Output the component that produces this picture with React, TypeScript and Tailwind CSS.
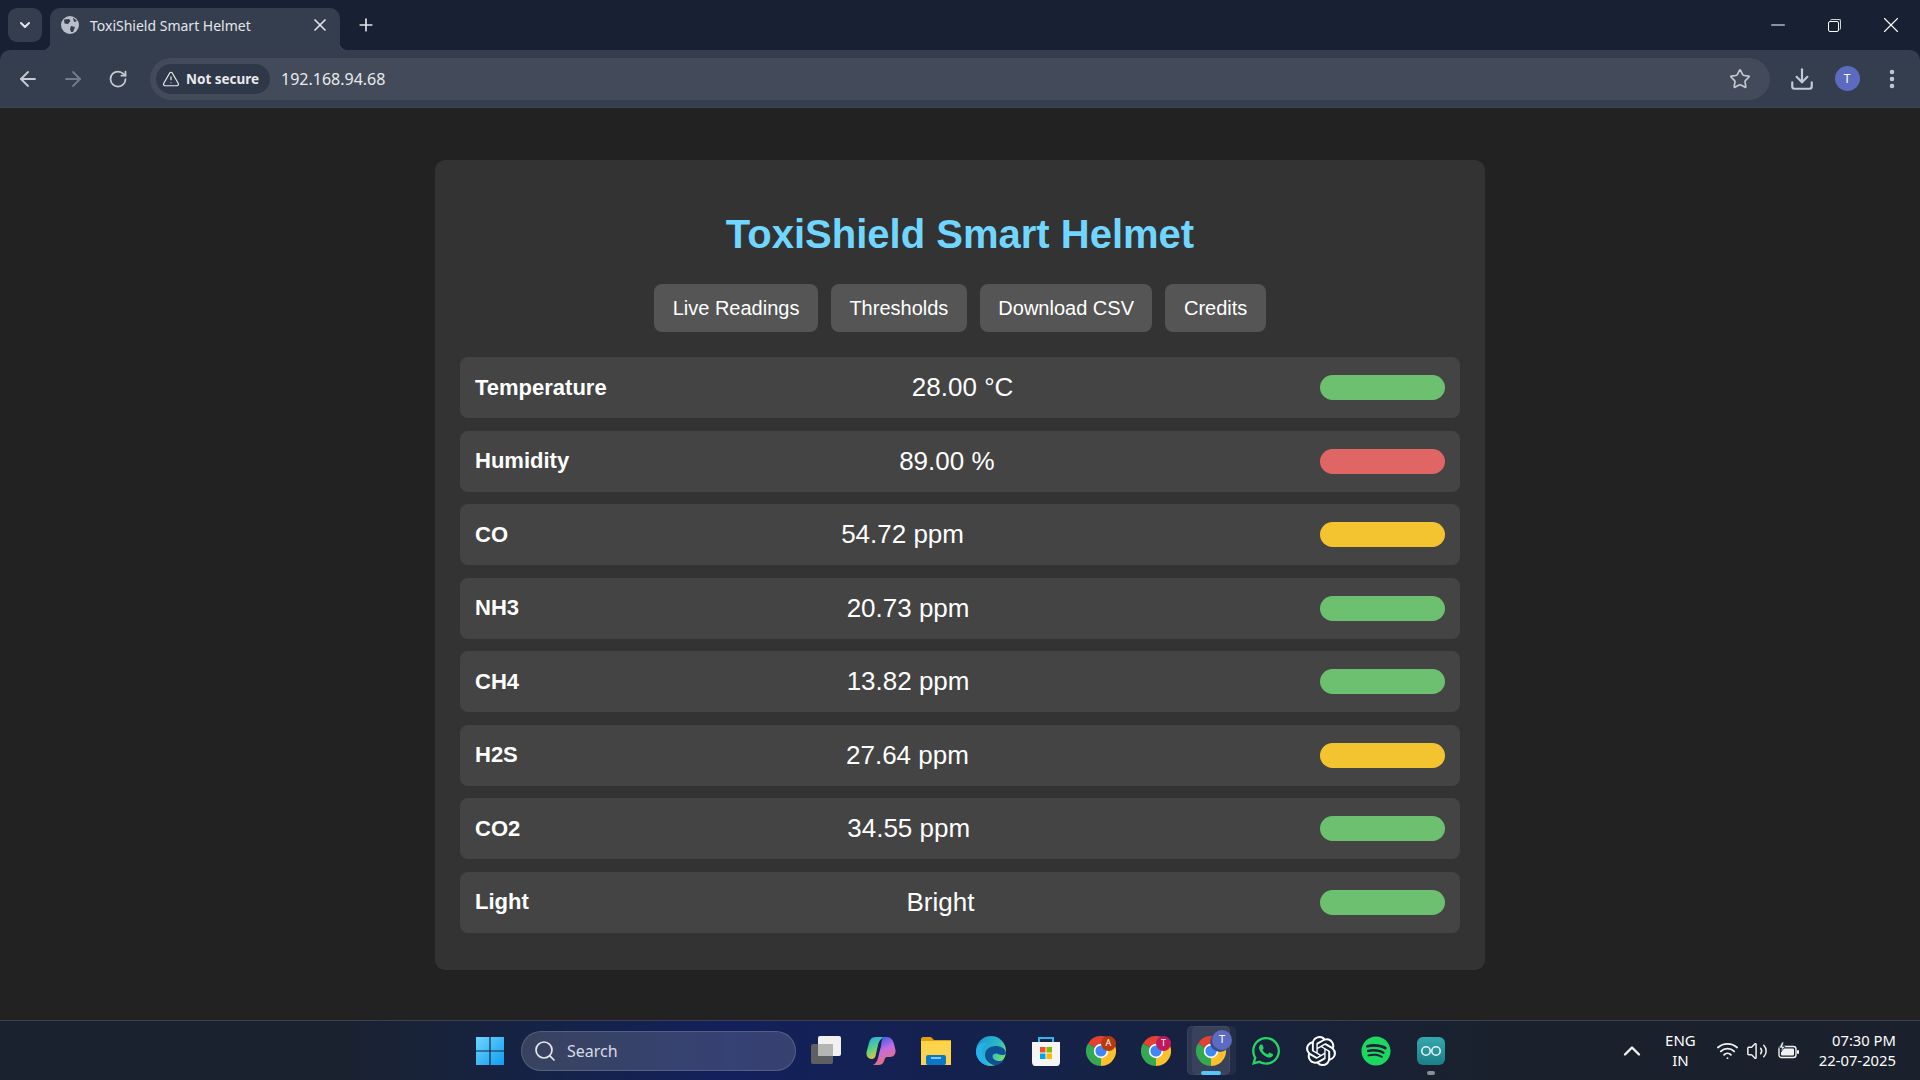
import React from "react";
import {
  ArrowLeft,
  ArrowRight,
  ChevronDown,
  ChevronUp,
  Download,
  EllipsisVertical,
  Minus,
  Plus,
  RotateCw,
  Search,
  Star,
  TriangleAlert,
  Volume2,
  Wifi,
  X,
} from "lucide-react";
import { FaSpotify, FaWhatsapp } from "react-icons/fa";
import { SiOpenai } from "react-icons/si";

type Reading = {
  name: string;
  value: string;
  pill: string;
};

const readings: Reading[] = [
  { name: "Temperature", value: "28.00 °C", pill: "bg-[#6cc070]" },
  { name: "Humidity", value: "89.00 %", pill: "bg-[#e06666]" },
  { name: "CO", value: "54.72 ppm", pill: "bg-[#f4c430]" },
  { name: "NH3", value: "20.73 ppm", pill: "bg-[#6cc070]" },
  { name: "CH4", value: "13.82 ppm", pill: "bg-[#6cc070]" },
  { name: "H2S", value: "27.64 ppm", pill: "bg-[#f4c430]" },
  { name: "CO2", value: "34.55 ppm", pill: "bg-[#6cc070]" },
  { name: "Light", value: "Bright", pill: "bg-[#6cc070]" },
];

const tabs = ["Live Readings", "Thresholds", "Download CSV", "Credits"];

function GlobeIcon() {
  return (
    <svg width="18" height="18" viewBox="0 0 18 18">
      <circle cx="9" cy="9" r="9" fill="#b9bec8" />
      <path d="M3 3.5 L8 3 L9.5 5 L7 8 L3.5 7.5 Z M10 10 L14 11 L12 16 L10 16 L9 13 Z M12 1.5 L16 5 L13 6 Z" fill="#353e4f" />
    </svg>
  );
}

function ChromeIcon({ badge, badgeColor, large }: { badge: string; badgeColor: string; large?: boolean }) {
  return (
    <div className="relative h-[30px] w-[30px]">
      <svg width="30" height="30" viewBox="0 0 30 30">
        <path d="M15 15 L2 7.5 A15 15 0 0 1 28 7.5 Z" fill="#e34133" />
        <path d="M15 15 L28 7.5 A15 15 0 0 1 15 30 Z" fill="#fbc02d" />
        <path d="M15 15 L15 30 A15 15 0 0 1 2 7.5 Z" fill="#34a853" />
        <circle cx="15" cy="15" r="7.2" fill="#ffffff" />
        <circle cx="15" cy="15" r="5.6" fill="#4285f4" />
      </svg>
      {large ? (
        <div className="absolute right-[-6px] top-[-6px] flex h-[20px] w-[20px] items-center justify-center rounded-full bg-[#5c6bc0] font-['Noto_Sans'] text-[11px] text-white shadow-[-2px_2px_0_#3f4a8a]">
          {badge}
        </div>
      ) : (
        <div
          className={`absolute right-0 top-0 flex h-[15px] w-[15px] items-center justify-center rounded-full font-['Noto_Sans'] text-[9px] text-white ${badgeColor}`}
        >
          {badge}
        </div>
      )}
    </div>
  );
}

function WindowsIcon() {
  return (
    <svg width="30" height="30" viewBox="0 0 30 30">
      <defs>
        <linearGradient id="winGrad" x1="0" y1="0" x2="1" y2="1">
          <stop offset="0" stopColor="#6fd6ff" />
          <stop offset="1" stopColor="#0f9cf0" />
        </linearGradient>
      </defs>
      <path d="M1 1 H14.4 V14.4 H1 Z M15.6 1 H29 V14.4 H15.6 Z M1 15.6 H14.4 V29 H1 Z M15.6 15.6 H29 V29 H15.6 Z" fill="url(#winGrad)" />
    </svg>
  );
}

function TaskViewIcon() {
  return (
    <svg width="30" height="30" viewBox="0 0 30 30">
      <rect x="0" y="8" width="22" height="20" rx="2" fill="#5d5f63" />
      <rect x="7" y="0" width="23" height="20" rx="2" fill="#f1f1f1" />
      <rect x="7" y="8" width="15" height="12" fill="#b5b5b5" />
    </svg>
  );
}

function CopilotIcon() {
  return (
    <svg width="30" height="30" viewBox="0 0 30 30">
      <defs>
        <linearGradient id="copA" x1="0.2" y1="0" x2="0.6" y2="1">
          <stop offset="0" stopColor="#2aa8f0" />
          <stop offset="0.45" stopColor="#4fd08a" />
          <stop offset="1" stopColor="#f6c431" />
        </linearGradient>
        <linearGradient id="copB" x1="0.3" y1="0" x2="0.7" y2="1">
          <stop offset="0" stopColor="#2f5fe8" />
          <stop offset="0.45" stopColor="#c36be6" />
          <stop offset="1" stopColor="#f4705a" />
        </linearGradient>
      </defs>
      <path d="M9 1 H19 C15 2 13 5 12 9 L9.5 20 C9 22 7.5 23 6 23 C2 23 0 20 0.5 16 L3 7 C4 3 6 1 9 1 Z" fill="url(#copA)" />
      <path d="M17 1 H21 C25 1 27 4 28 8 L29.5 14 C30 18 28 21 24 21 H21 C19 21 19 23 18 25 C17 28 15 29 12 29 H7 C9 28 11 26 12 22 L15 10 C15.5 6 16 3 17 1 Z" fill="url(#copB)" />
    </svg>
  );
}

function FolderIcon() {
  return (
    <svg width="30" height="30" viewBox="0 0 30 30">
      <path d="M0 3 C0 2 1 1 2 1 H10 L13 4 H30 V8 H0 Z" fill="#e0a00c" />
      <path d="M0 5 H30 V29 H0 Z" fill="#fcd34d" />
      <rect x="5" y="19" width="20" height="10" rx="2" fill="#0a78c9" />
      <rect x="10" y="21" width="10" height="2" fill="#7fc8f2" />
    </svg>
  );
}

function EdgeIcon() {
  return (
    <svg width="30" height="30" viewBox="0 0 30 30">
      <defs>
        <linearGradient id="edgeA" x1="0" y1="0" x2="1" y2="0.7">
          <stop offset="0" stopColor="#1792d8" />
          <stop offset="0.6" stopColor="#2bb8c8" />
          <stop offset="1" stopColor="#7be06a" />
        </linearGradient>
      </defs>
      <circle cx="15" cy="15" r="15" fill="url(#edgeA)" />
      <path d="M30 17 C29 12 25 10 20 10 C13 10 9 14 9 19 C9 25 15 30 21 29 C25 28 27 26 28 24 C24 26 17 25 16.5 20.5 C16.5 18 19 17 22 18 C25 19 29 20 30 17 Z" fill="#0f4f96" />
      <path d="M0 15 C1 9 6 6 11 7 C7 10 5 15 6.5 21 C8 25 11 28 15 30 C6 30 0 23 0 15 Z" fill="#25b2ea" />
    </svg>
  );
}

function StoreIcon() {
  return (
    <svg width="30" height="30" viewBox="0 0 30 30">
      <path d="M8 7 V2 H22 V7" fill="none" stroke="#2fb6f0" strokeWidth="2" />
      <path d="M1 6 H29 V26 C29 28 28 30 26 30 H4 C2 30 1 28 1 26 Z" fill="#f5f5f5" />
      <rect x="9" y="11" width="5.5" height="5.5" fill="#f25022" />
      <rect x="15.5" y="11" width="5.5" height="5.5" fill="#7fba00" />
      <rect x="9" y="17.5" width="5.5" height="5.5" fill="#00a4ef" />
      <rect x="15.5" y="17.5" width="5.5" height="5.5" fill="#ffb900" />
    </svg>
  );
}

function ArduinoIcon() {
  return (
    <svg width="28" height="30" viewBox="0 0 28 30">
      <defs>
        <linearGradient id="ardGrad" x1="0" y1="0" x2="0" y2="1">
          <stop offset="0" stopColor="#35a8ad" />
          <stop offset="1" stopColor="#1b7f86" />
        </linearGradient>
      </defs>
      <rect width="28" height="28" y="1" rx="6" fill="url(#ardGrad)" />
      <circle cx="9" cy="15" r="4.2" fill="none" stroke="#dff5f5" strokeWidth="1.6" />
      <circle cx="19" cy="15" r="4.2" fill="none" stroke="#dff5f5" strokeWidth="1.6" />
    </svg>
  );
}

function BatteryIcon() {
  return (
    <svg width="22" height="18" viewBox="0 0 22 18">
      <rect x="1" y="4.5" width="17" height="11" rx="2.5" fill="none" stroke="#f2f2f2" strokeWidth="1.4" />
      <rect x="3" y="6.5" width="13" height="7" rx="1" fill="#f2f2f2" />
      <rect x="19" y="8" width="2" height="4" rx="1" fill="#f2f2f2" />
      <path d="M4 0 L1 6 H4 L3 10 L7 4.5 H4.5 L6 0 Z" fill="#f2f2f2" stroke="#1a212d" strokeWidth="0.7" />
    </svg>
  );
}

function TaskIcon({ children, active, dot }: { children: React.ReactNode; active?: boolean; dot?: boolean }) {
  return (
    <div className="relative flex h-[50px] w-[55px] items-center justify-center">
      {active && (
        <>
          <div className="absolute left-[8px] top-0 h-[49px] w-[44px] rounded-[5px] bg-white/5" />
          <div className="absolute left-[3px] top-0 h-[49px] w-[43px] rounded-[5px] border border-white/5 bg-white/10" />
          <div className="absolute bottom-[1px] left-[17px] h-[4px] w-[20px] rounded-full bg-[#58c6fa]" />
        </>
      )}
      {dot && <div className="absolute bottom-[1px] left-[23px] h-[4px] w-[8px] rounded-full bg-[#8b8f98]" />}
      <div className="relative">{children}</div>
    </div>
  );
}

export default function App() {
  return (
    <div className="flex h-[1080px] w-[1920px] flex-col overflow-hidden bg-[#222222] font-['Liberation_Sans',Arial,sans-serif]">
      {/* browser chrome */}
      <div className="bg-[#182133]">
        <div className="flex h-[50px] items-end">
          <div className="mb-[8px] ml-[8px] flex h-[34px] w-[34px] items-center justify-center rounded-[9px] bg-[#353e4f]">
            <ChevronDown size={16} strokeWidth={3} className="text-[#e4e6ea]" />
          </div>
          <div className="relative ml-[8px] flex h-[42px] w-[290px] items-center rounded-t-[10px] bg-[#353e4f] pb-[8px] pl-[11px] pr-[10px]">
            <div className="absolute bottom-0 left-[-8px] h-[8px] w-[8px] bg-[radial-gradient(circle_at_0_0,#182133_8px,#353e4f_8.5px)]" />
            <div className="absolute bottom-0 right-[-8px] h-[8px] w-[8px] bg-[radial-gradient(circle_at_100%_0,#182133_8px,#353e4f_8.5px)]" />
            <GlobeIcon />
            <span className="ml-[11px] flex-1 font-['Noto_Sans'] text-[14px] text-[#e3e5e9]">ToxiShield Smart Helmet</span>
            <X size={20} strokeWidth={2} className="text-[#e3e5e9]" />
          </div>
          <Plus size={20} strokeWidth={2} className="mb-[15px] ml-[16px] text-[#e3e5e9]" />
          <div className="mb-[8px] ml-auto mr-[1px] flex h-[34px] items-center">
            <div className="flex w-[57px] justify-center">
              <Minus size={22} strokeWidth={1.1} className="text-white" />
            </div>
            <div className="relative flex w-[57px] justify-center">
              <div className="relative h-[13px] w-[13px]">
                <div className="absolute right-0 top-0 h-[11px] w-[11px] rounded-[2px] border-r border-t border-[#cfd2d7]" />
                <div className="absolute bottom-0 left-0 h-[11px] w-[11px] rounded-[2px] border border-white" />
              </div>
            </div>
            <div className="flex w-[56px] justify-center">
              <X size={26} strokeWidth={1} className="text-white" />
            </div>
          </div>
        </div>
        <div className="flex h-[58px] items-center rounded-t-[10px] border-b border-[#3e4656] bg-[#353e4f] pl-[5px]">
          <div className="flex w-[45px] justify-center">
            <ArrowLeft size={24} strokeWidth={1.8} className="text-[#c6cad2]" />
          </div>
          <div className="flex w-[45px] justify-center">
            <ArrowRight size={24} strokeWidth={1.8} className="text-[#737b8a]" />
          </div>
          <div className="flex w-[45px] justify-center">
            <RotateCw size={20} strokeWidth={2.1} className="text-[#c6cad2]" />
          </div>
          <div className="ml-[10px] flex h-[42px] w-[1620px] items-center rounded-full bg-[#434a59] pl-[6px] pr-[19px]">
            <div className="flex h-[30px] w-[114px] items-center rounded-full bg-[#2f3849] pl-[6px]">
              <TriangleAlert size={18} strokeWidth={1.6} className="text-[#e8eaed]" />
              <span className="ml-[6px] mt-[1px] font-['Noto_Sans'] text-[13.5px] font-bold text-[#e8eaed]">Not secure</span>
            </div>
            <span className="ml-[11px] mt-[1px] font-['Noto_Sans'] text-[16px] text-[#e8eaed]">192.168.94.68</span>
            <Star size={22} strokeWidth={1.8} className="ml-auto text-[#c4c8cf]" />
          </div>
          <Download size={26} strokeWidth={2} className="ml-[19px] text-[#c2c9da]" />
          <div className="ml-[19.5px] flex h-[25px] w-[25px] items-center justify-center rounded-full bg-[#5c6bc0] font-['Noto_Sans'] text-[12px] text-white">
            T
          </div>
          <EllipsisVertical size={24} strokeWidth={2.5} className="ml-[20.5px] text-[#c2c9da]" />
        </div>
      </div>

      {/* page */}
      <div className="flex flex-1 justify-center pt-[52px]">
        <div className="h-[810px] w-[1050px] rounded-[10px] bg-[#333333] px-[25px] pt-[51px] text-white">
          <h1 className="text-center text-[40px] font-bold leading-[46px] text-[#70d6ff]">ToxiShield Smart Helmet</h1>
          <div className="mt-[27px] flex justify-center gap-[13px]">
            {tabs.map((t) => (
              <button key={t} className="h-[48px] rounded-[8px] bg-[#555555] px-[18.5px] text-[20px] text-white">
                {t}
              </button>
            ))}
          </div>
          <div className="mt-[25px] flex flex-col gap-[12.5px]">
            {readings.map((r) => (
              <div key={r.name} className="flex h-[61px] items-center justify-between rounded-[8px] bg-[#444444] px-[15px]">
                <span className="pb-[1px] text-[22px] font-bold">{r.name}</span>
                {/* fixed box, long values spill out to the left */}
                <span className="flex w-[100px] justify-end whitespace-nowrap text-[26px]">{r.value}</span>
                <div className={`h-[25px] w-[125px] rounded-full ${r.pill}`} />
              </div>
            ))}
          </div>
        </div>
      </div>

      {/* taskbar */}
      <div className="relative flex h-[60px] items-center border-t border-[#3b4150] bg-gradient-to-r from-[#1a2230] from-[18%] via-[#13205c] via-[38%] to-[#1a212d] to-[78%] pl-[465px] text-white">
        <div className="flex w-[50px] justify-center">
          <WindowsIcon />
        </div>
        <div className="ml-[6px] flex h-[40px] w-[275px] items-center rounded-full border border-white/15 bg-white/15 pl-[11px]">
          <Search size={24} strokeWidth={1.7} className="text-[#e6e8ee]" />
          <span className="ml-[10px] font-['Noto_Sans'] text-[16px] text-[#d8dbe4]">Search</span>
        </div>
        <div className="ml-[2.5px] flex items-center">
          <TaskIcon><TaskViewIcon /></TaskIcon>
          <TaskIcon><CopilotIcon /></TaskIcon>
          <TaskIcon><FolderIcon /></TaskIcon>
          <TaskIcon><EdgeIcon /></TaskIcon>
          <TaskIcon><StoreIcon /></TaskIcon>
          <TaskIcon><ChromeIcon badge="A" badgeColor="bg-[#b83a0c]" /></TaskIcon>
          <TaskIcon><ChromeIcon badge="T" badgeColor="bg-[#c2185b]" /></TaskIcon>
          <TaskIcon active><ChromeIcon badge="T" badgeColor="bg-[#5c6bc0]" large /></TaskIcon>
          <TaskIcon><FaWhatsapp size={32} className="text-[#25d366]" /></TaskIcon>
          <TaskIcon><SiOpenai size={30} className="text-white" /></TaskIcon>
          <TaskIcon><FaSpotify size={30} className="text-[#1ed760]" /></TaskIcon>
          <TaskIcon dot><ArduinoIcon /></TaskIcon>
        </div>
        <div className="ml-auto flex items-center pr-[24px]">
          <ChevronUp size={28} strokeWidth={2} className="text-[#f2f2f2]" />
          <div className="ml-[19px] pb-[2px] text-center font-['Noto_Sans'] text-[15px] leading-[20px]">
            <div>ENG</div>
            <div>IN</div>
          </div>
          <Wifi size={23} strokeWidth={1.9} className="ml-[20.5px] text-[#f2f2f2]" />
          <Volume2 size={22} strokeWidth={1.6} className="ml-[6.5px] text-[#f2f2f2]" />
          <div className="ml-[10px]">
            <BatteryIcon />
          </div>
          <div className="ml-[19px] pb-[2px] text-right font-['Noto_Sans'] text-[14.8px] leading-[20px]">
            <div>07:30 PM</div>
            <div>22-07-2025</div>
          </div>
        </div>
      </div>
    </div>
  );
}
